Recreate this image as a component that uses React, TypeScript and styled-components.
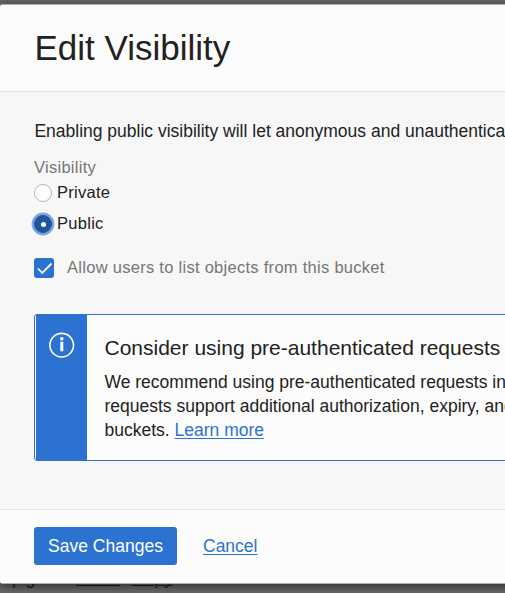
import React, { useState } from "react";
import styled, { createGlobalStyle } from "styled-components";

const GlobalStyle = createGlobalStyle`
  *, *::before, *::after { box-sizing: border-box; }
  html, body { margin: 0; height: 593px; overflow: hidden; }
  body {
    background: #666;
    color: #222;
    font-family: "Liberation Sans", Arial, sans-serif;
    font-size: 17.5px;
    line-height: 24px;
  }
`;

const Screen = styled.div`
  width: 505px;
  height: 593px;
  padding-top: 4px;
  overflow: hidden;
`;

const Dialog = styled.div`
  position: relative;
  z-index: 1;
  display: flex;
  flex-direction: column;
  width: 760px;
  height: 580px;
  border: solid #aab4be;
  border-width: 1px 0;
  border-radius: 3px;
  background: #f7f7f7;
  box-shadow: 0 2px 8px rgba(0, 0, 0, 0.6);
  overflow: hidden;
`;

const Header = styled.header`
  height: 87px;
  padding: 22px 34px 0 34.4px;
  background: #fcfcfc;
  border-bottom: 1px solid #e3e3e3;
`;

const Title = styled.h1`
  margin: 0;
  font-size: 35px;
  font-weight: 400;
  line-height: 42px;
`;

const Body = styled.main`
  flex: 1;
  padding: 27px 34px 0;
`;

const Intro = styled.p`
  margin: 0 0 0 0.4px;
  white-space: nowrap;
`;

const Fieldset = styled.div`
  display: flex;
  flex-direction: column;
  margin-top: 13px;
  font-size: 16.5px;
  letter-spacing: 0.28px;
`;

const Legend = styled.span`
  height: 21px;
  line-height: 23px;
  color: #767676;
`;

const RadioLabel = styled.label`
  display: flex;
  align-items: center;
  gap: 5px;
  height: 31px;
  line-height: 28px;
  cursor: pointer;
`;

const HiddenInput = styled.input`
  appearance: none;
  width: 0;
  height: 0;
  margin: 0 -5px 0 0;
`;

const RadioDot = styled.span<{ $checked: boolean }>`
  display: flex;
  align-items: center;
  justify-content: center;
  width: 18px;
  height: 18px;
  margin-top: 1px;
  border: 1px solid ${(p) => (p.$checked ? "#1f5599" : "#b3b7bf")};
  border-radius: 50%;
  background: ${(p) => (p.$checked ? "#1f5599" : "#fff")};
  box-shadow: ${(p) => (p.$checked ? "0 0 0 2.4px #7ba6e6" : "none")};

  &::after {
    content: "";
    width: 5px;
    height: 5px;
    border-radius: 50%;
    background: #fff;
  }
`;

const RadioText = styled.span`
  height: 30px;
`;

const CheckLabel = styled.label`
  display: flex;
  align-items: center;
  gap: 13px;
  height: 22px;
  margin-top: 18px;
  color: #767676;
  cursor: pointer;
`;

const CheckBox = styled.span`
  display: flex;
  width: 20px;
  height: 20px;
  border-radius: 3px;
  background: #2c72d1;
`;

const CheckText = styled.span`
  height: 26px;
  line-height: 24px;
`;

const Notice = styled.section`
  display: flex;
  width: 690px;
  height: 147px;
  margin-top: 35px;
  padding-left: 1px;
  border: 1px solid #2c72d1;
  border-radius: 3px;
  background: #fcfcfc;
`;

const NoticeStripe = styled.div`
  display: flex;
  justify-content: center;
  align-items: flex-start;
  width: 51px;
  padding-top: 17px;
  background: #2c72d1;
`;

const NoticeContent = styled.div`
  padding: 20px 0 0 17.5px;
  white-space: nowrap;
`;

const NoticeTitle = styled.h2`
  margin: 0 0 9px;
  font-size: 21px;
  font-weight: 400;
  line-height: 26px;
`;

const NoticeText = styled.p`
  margin: 0;
`;

const Link = styled.a`
  color: #2c72d1;
  text-decoration: underline;
  text-underline-offset: 2px;
  text-decoration-thickness: 1px;
`;

const Footer = styled.footer`
  display: flex;
  align-items: center;
  gap: 26px;
  height: 74px;
  padding: 0 34px 2px;
  border-top: 1px solid #e3e3e3;
  background: #fcfcfc;
`;

const SaveButton = styled.button`
  width: 143px;
  height: 38px;
  padding: 0;
  border: 0;
  border-radius: 3px;
  background: #2c72d1;
  color: #fff;
  font: inherit;
  cursor: pointer;
`;

const BackdropRow = styled.div`
  display: flex;
  height: 24px;
  margin-top: -18px;
  padding-left: 12px;
  color: #1c1c1c;
  white-space: nowrap;
`;

const BackdropId = styled.span`
  width: 64px;
`;

const BackdropAction = styled.span`
  margin-right: 12px;
  text-decoration: underline;
  text-decoration-thickness: 1px;
  text-underline-offset: 1px;
`;

const CheckMark = () => (
  <svg width="20" height="20" viewBox="0 0 20 20" fill="none">
    <path d="M4 10.5 8.3 15 17.5 5.5" stroke="#fff" strokeWidth="1.8" />
  </svg>
);

const InfoIcon = () => (
  <svg width="26" height="26" viewBox="0 0 26 26" fill="none">
    <circle cx="12.7" cy="13.2" r="11.8" stroke="#fff" strokeWidth="1.6" />
    <path d="M11.3 5.2h3v3h-3zM11.3 9.8h3v9.4h-3z" fill="#fff" />
  </svg>
);

export default function App() {
  const [visibility, setVisibility] = useState("Public");
  const [listing, setListing] = useState(true);

  return (
    <>
      <GlobalStyle />
      <Screen>
        <Dialog role="dialog">
          <Header>
            <Title>Edit Visibility</Title>
          </Header>
          <Body>
            <Intro>Enabling public visibility will let anonymous and unauthenticated</Intro>
            <Fieldset>
              <Legend>Visibility</Legend>
              {["Private", "Public"].map((name) => (
                <RadioLabel key={name}>
                  <HiddenInput
                    type="radio"
                    name="visibility"
                    checked={visibility === name}
                    onChange={() => setVisibility(name)}
                  />
                  <RadioDot $checked={visibility === name} />
                  <RadioText>{name}</RadioText>
                </RadioLabel>
              ))}
              <CheckLabel onClick={() => setListing(!listing)}>
                <CheckBox>{listing && <CheckMark />}</CheckBox>
                <CheckText>Allow users to list objects from this bucket</CheckText>
              </CheckLabel>
            </Fieldset>
            <Notice>
              <NoticeStripe>
                <InfoIcon />
              </NoticeStripe>
              <NoticeContent>
                <NoticeTitle>Consider using pre-authenticated requests</NoticeTitle>
                <NoticeText>
                  We recommend using pre-authenticated requests in
                  <br />
                  requests support additional authorization, expiry, and
                  <br />
                  buckets. <Link>Learn more</Link>
                </NoticeText>
              </NoticeContent>
            </Notice>
          </Body>
          <Footer>
            <SaveButton>Save Changes</SaveButton>
            <Link>Cancel</Link>
          </Footer>
        </Dialog>
        <BackdropRow>
          <BackdropId>pig...</BackdropId>
          <BackdropAction>Show</BackdropAction>
          <BackdropAction>Copy</BackdropAction>
        </BackdropRow>
      </Screen>
    </>
  );
}
